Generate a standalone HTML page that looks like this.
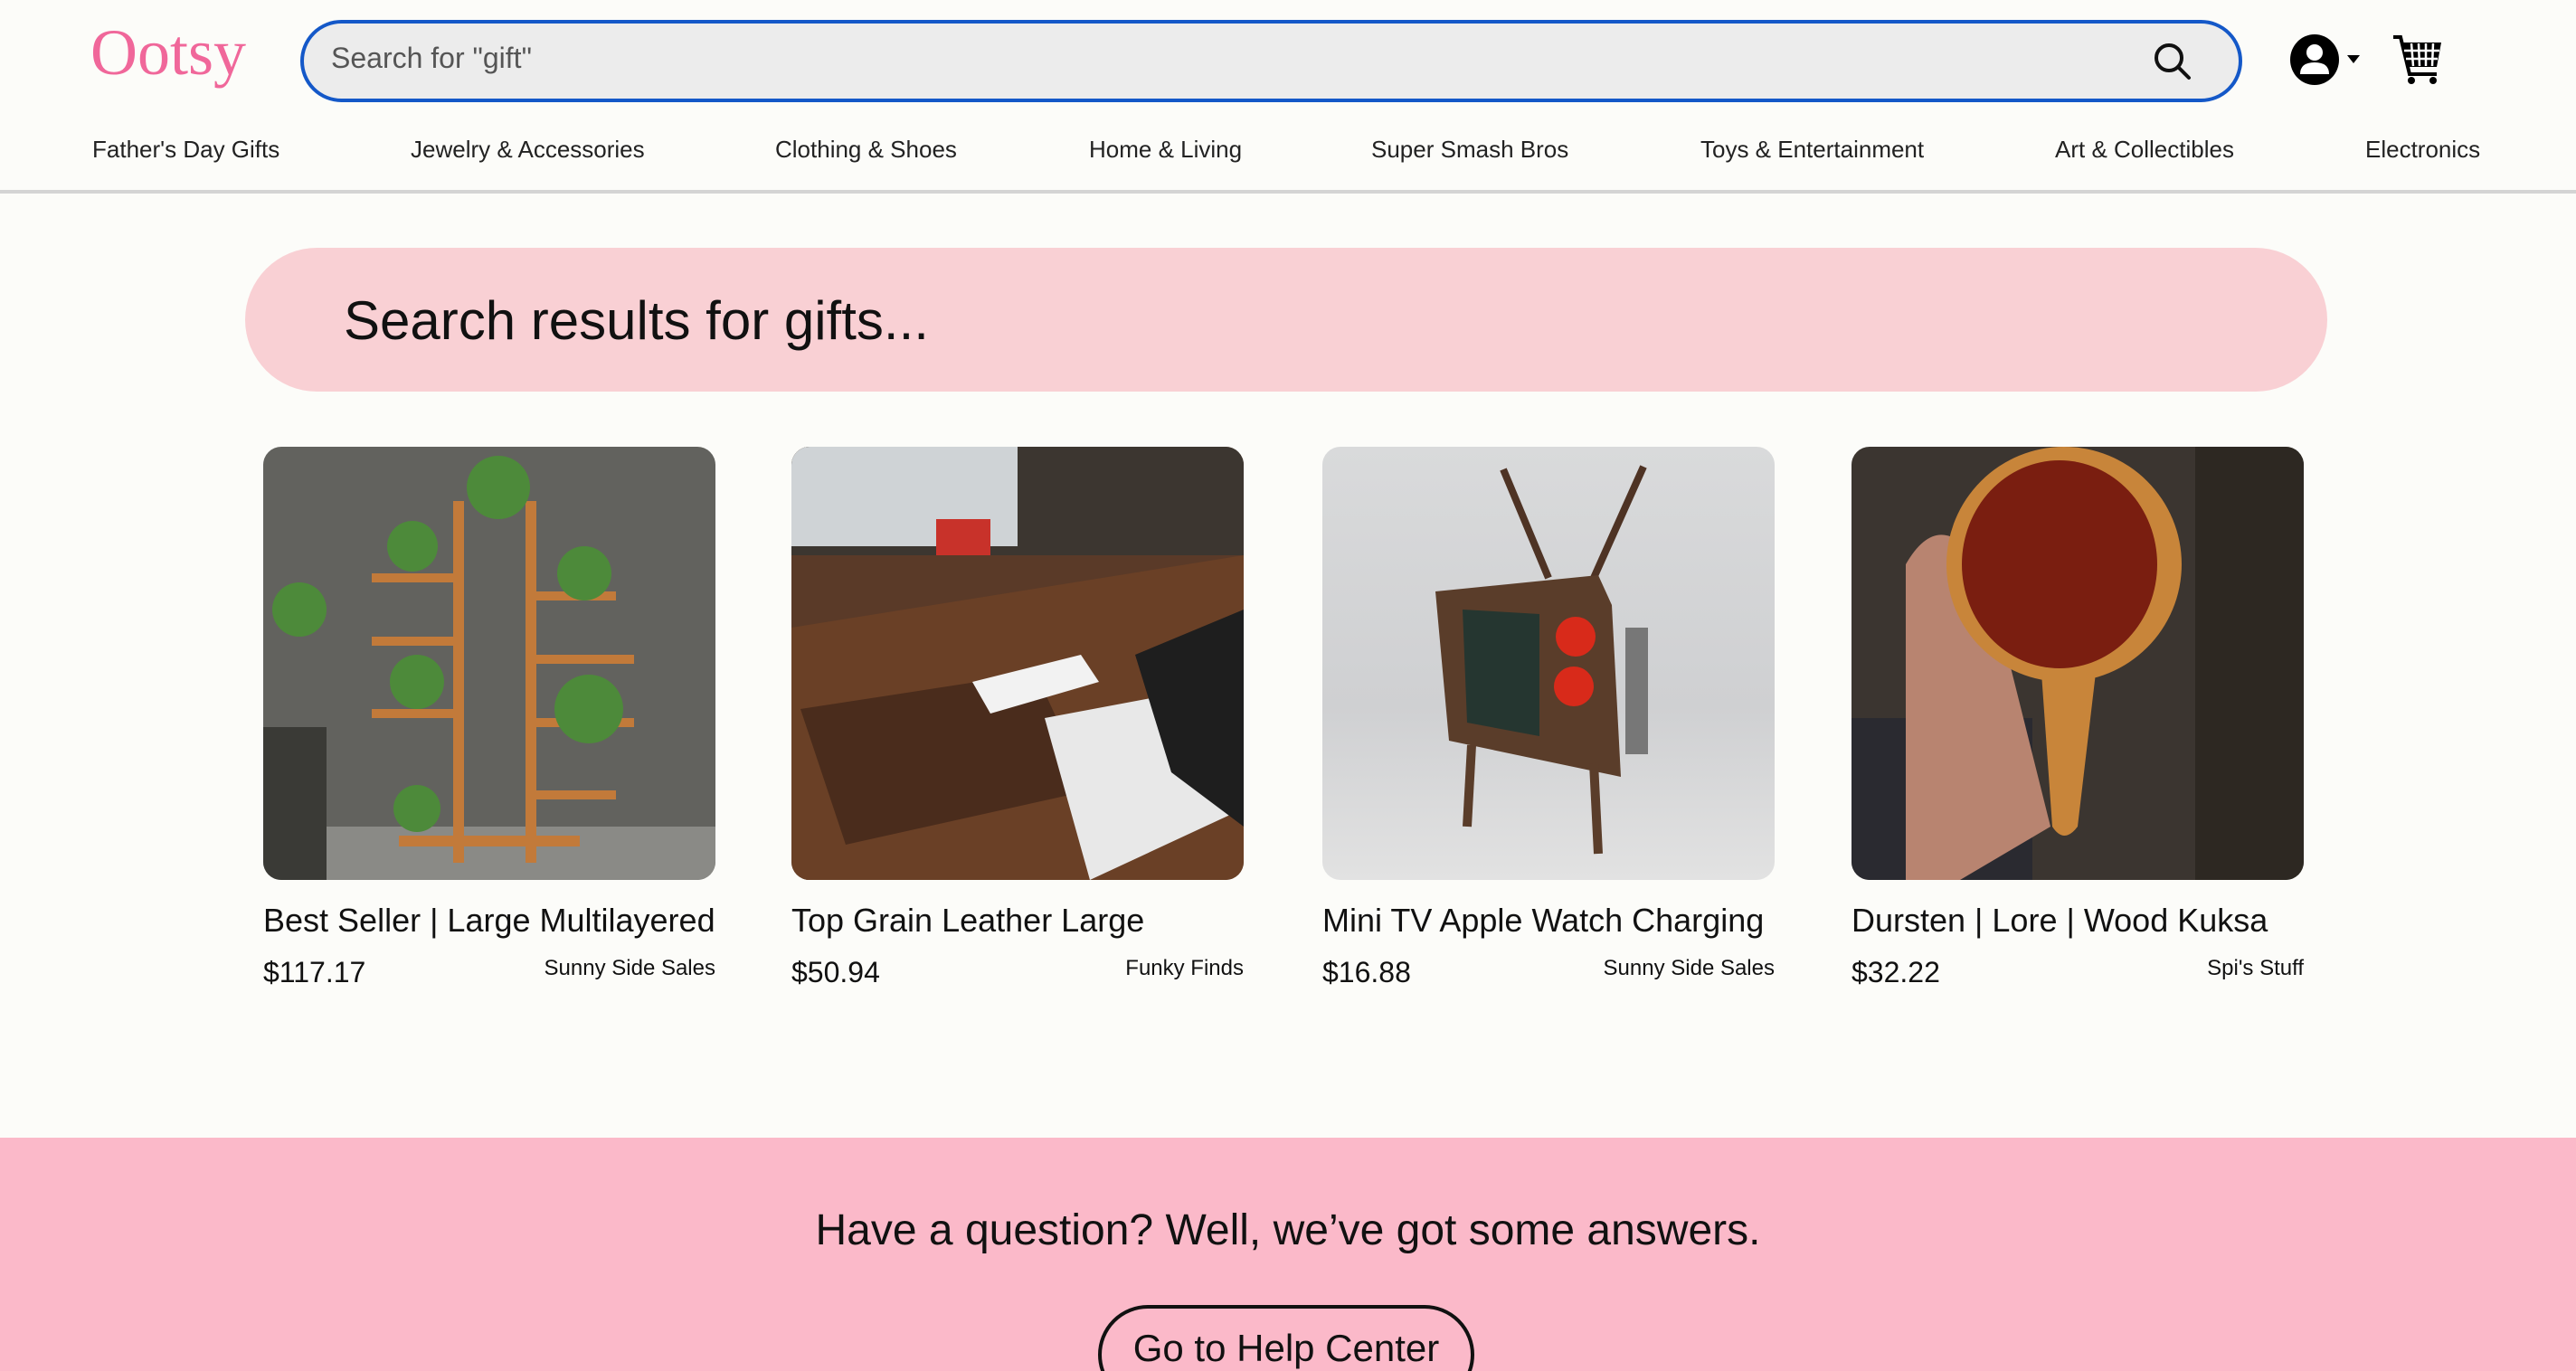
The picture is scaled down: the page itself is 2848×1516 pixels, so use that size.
<!DOCTYPE html>
<html style="width:2848px;height:1516px;overflow:hidden"><head><meta charset="utf-8">
<style>
*{margin:0;padding:0;box-sizing:border-box}
body{width:2848px;height:1516px;overflow:hidden;background:#fcfcf9;font-family:"Liberation Sans",Arial,sans-serif;color:#111;position:relative}
.abs{position:absolute}
.logo{left:100px;top:22px;font-family:"Liberation Serif",serif;font-size:72px;color:#f0679a;line-height:1}
.search{left:332px;top:22px;width:2147px;height:91px;border:4px solid #1458c8;border-radius:46px;background:#ececec}
.ph{left:366px;top:46px;font-size:32px;color:#555}
.nav{top:150px;font-size:26px;color:#222}
.divider{left:0;top:210px;width:2848px;height:4px;background:#d4d4d4}
.banner{left:271px;top:274px;width:2302px;height:159px;border-radius:80px;background:#f9d0d4}
.banner span{position:absolute;left:109px;top:46px;font-size:60px;color:#111}
.img{top:494px;width:500px;height:479px;border-radius:20px;overflow:hidden}
.title{top:997px;font-size:36px;color:#111;white-space:nowrap}
.price{top:1057px;font-size:32px;color:#111}
.seller{top:1057px;font-size:24px;color:#111;text-align:right;width:500px}
.footer{left:0;top:1258px;width:2848px;height:258px;background:#fbb9c9;overflow:hidden}
.q{left:0;top:75px;width:2848px;text-align:center;font-size:48px;color:#111}
.btn{left:1214px;top:185px;width:416px;height:110px;border:4px solid #111;border-radius:55px;text-align:center;font-size:42px;padding-top:20px}
</style></head><body>
<div class="abs logo">Ootsy</div>
<div class="abs search"></div>
<div class="abs ph">Search for "gift"</div>
<svg class="abs" style="left:2378px;top:44px" width="48" height="48" viewBox="0 0 48 48"><circle cx="20" cy="20" r="14" fill="none" stroke="#111" stroke-width="4"/><line x1="30" y1="30" x2="42" y2="42" stroke="#111" stroke-width="4" stroke-linecap="round"/></svg>
<svg class="abs" style="left:2531px;top:38px" width="84" height="58" viewBox="0 0 84 58"><ellipse cx="28" cy="28" rx="27" ry="28" fill="#000"/><circle cx="28" cy="20" r="9" fill="#fff"/><path d="M12 44 Q12 31 28 31 Q44 31 44 44 Z" fill="#fff"/><path d="M64 23 L78 23 L71 32 Z" fill="#000"/></svg>
<svg class="abs" style="left:2644px;top:38px" width="58" height="56" viewBox="0 0 58 56"><path d="M2 3 H10 L20 44 H50" fill="none" stroke="#000" stroke-width="4"/><path d="M11 9 H55 L50 36 H17 Z" fill="#000"/><g stroke="#fff" stroke-width="2.5"><line x1="14" y1="18" x2="53" y2="18"/><line x1="16" y1="27" x2="51" y2="27"/><line x1="22" y1="10" x2="24" y2="35"/><line x1="30" y1="10" x2="31" y2="35"/><line x1="38" y1="10" x2="38" y2="35"/><line x1="46" y1="10" x2="45" y2="35"/></g><circle cx="22" cy="51" r="4" fill="#000"/><circle cx="46" cy="51" r="4" fill="#000"/></svg>
<div class="abs nav" style="left:102px">Father's Day Gifts</div>
<div class="abs nav" style="left:454px">Jewelry &amp; Accessories</div>
<div class="abs nav" style="left:857px">Clothing &amp; Shoes</div>
<div class="abs nav" style="left:1204px">Home &amp; Living</div>
<div class="abs nav" style="left:1516px">Super Smash Bros</div>
<div class="abs nav" style="left:1880px">Toys &amp; Entertainment</div>
<div class="abs nav" style="left:2272px">Art &amp; Collectibles</div>
<div class="abs nav" style="left:2615px">Electronics</div>
<div class="abs divider"></div>
<div class="abs banner"><span>Search results for gifts...</span></div>

<div class="abs img" style="left:291px;background:#62625e">
<svg width="500" height="479"><rect x="0" y="420" width="500" height="59" fill="#8a8a86"/><rect x="0" y="310" width="70" height="170" fill="#3a3a36"/><g fill="#c27a3a"><rect x="210" y="60" width="12" height="400"/><rect x="290" y="60" width="12" height="400"/><rect x="120" y="140" width="100" height="10"/><rect x="120" y="210" width="100" height="10"/><rect x="120" y="290" width="100" height="10"/><rect x="290" y="160" width="100" height="10"/><rect x="290" y="230" width="120" height="10"/><rect x="290" y="300" width="120" height="10"/><rect x="290" y="380" width="100" height="10"/><rect x="150" y="430" width="200" height="12"/></g><g fill="#4d8a3a"><circle cx="260" cy="45" r="35"/><circle cx="165" cy="110" r="28"/><circle cx="355" cy="140" r="30"/><circle cx="170" cy="260" r="30"/><circle cx="360" cy="290" r="38"/><circle cx="40" cy="180" r="30"/><circle cx="170" cy="400" r="26"/></g></svg></div>
<div class="abs img" style="left:875px;background:#5a3a28">
<svg width="500" height="479"><rect width="500" height="120" fill="#3c3630"/><rect x="0" y="0" width="250" height="110" fill="#cfd3d6"/><path d="M0 200 L500 120 L500 479 L0 479Z" fill="#6a4026"/><path d="M10 290 L270 250 L330 380 L60 440Z" fill="#4a2c1c"/><path d="M200 260 L320 230 L340 260 L220 295Z" fill="#f2f2f2"/><path d="M280 300 L440 270 L500 400 L330 479Z" fill="#e8e8e8"/><path d="M380 230 L500 180 L500 420 L420 360Z" fill="#1e1e1e"/><rect x="160" y="80" width="60" height="40" fill="#c8322a"/></svg></div>
<div class="abs img" style="left:1462px;background:linear-gradient(#d9dadb,#cfd0d2 60%,#e2e2e2)">
<svg width="500" height="479"><g stroke="#4e3324" stroke-width="8"><line x1="200" y1="25" x2="250" y2="145"/><line x1="355" y1="22" x2="300" y2="145"/></g><path d="M125 160 L305 142 L320 175 L330 365 L140 325Z" fill="#5a3d2a"/><path d="M155 180 L240 185 L240 320 L160 305Z" fill="#253630"/><circle cx="280" cy="210" r="22" fill="#d82a1a"/><circle cx="278" cy="265" r="22" fill="#d82a1a"/><g stroke="#5a3d2a" stroke-width="10"><line x1="165" y1="330" x2="160" y2="420"/><line x1="300" y1="350" x2="305" y2="450"/></g><rect x="335" y="200" width="25" height="140" fill="#777"/></svg></div>
<div class="abs img" style="left:2047px;background:#3b3530">
<svg width="500" height="479"><rect x="380" y="0" width="120" height="479" fill="#2d2822"/><rect x="0" y="300" width="200" height="179" fill="#2a2a30"/><path d="M60 130 Q100 60 150 140 L220 420 L120 479 L60 479Z" fill="#b88470"/><ellipse cx="235" cy="130" rx="130" ry="130" fill="#c8853a"/><ellipse cx="230" cy="130" rx="108" ry="115" fill="#7a1e10"/><path d="M210 250 L270 250 L250 420 Q235 440 222 420Z" fill="#c8853a"/></svg></div>

<div class="abs title" style="left:291px">Best Seller | Large Multilayered</div>
<div class="abs price" style="left:291px">$117.17</div>
<div class="abs seller" style="left:291px">Sunny Side Sales</div>
<div class="abs title" style="left:875px">Top Grain Leather Large</div>
<div class="abs price" style="left:875px">$50.94</div>
<div class="abs seller" style="left:875px">Funky Finds</div>
<div class="abs title" style="left:1462px">Mini TV Apple Watch Charging</div>
<div class="abs price" style="left:1462px">$16.88</div>
<div class="abs seller" style="left:1462px">Sunny Side Sales</div>
<div class="abs title" style="left:2047px">Dursten | Lore | Wood Kuksa</div>
<div class="abs price" style="left:2047px">$32.22</div>
<div class="abs seller" style="left:2047px">Spi's Stuff</div>

<div class="abs footer">
<div class="abs q">Have a question? Well, we’ve got some answers.</div>
<div class="abs btn">Go to Help Center</div>
</div>
</body></html>
